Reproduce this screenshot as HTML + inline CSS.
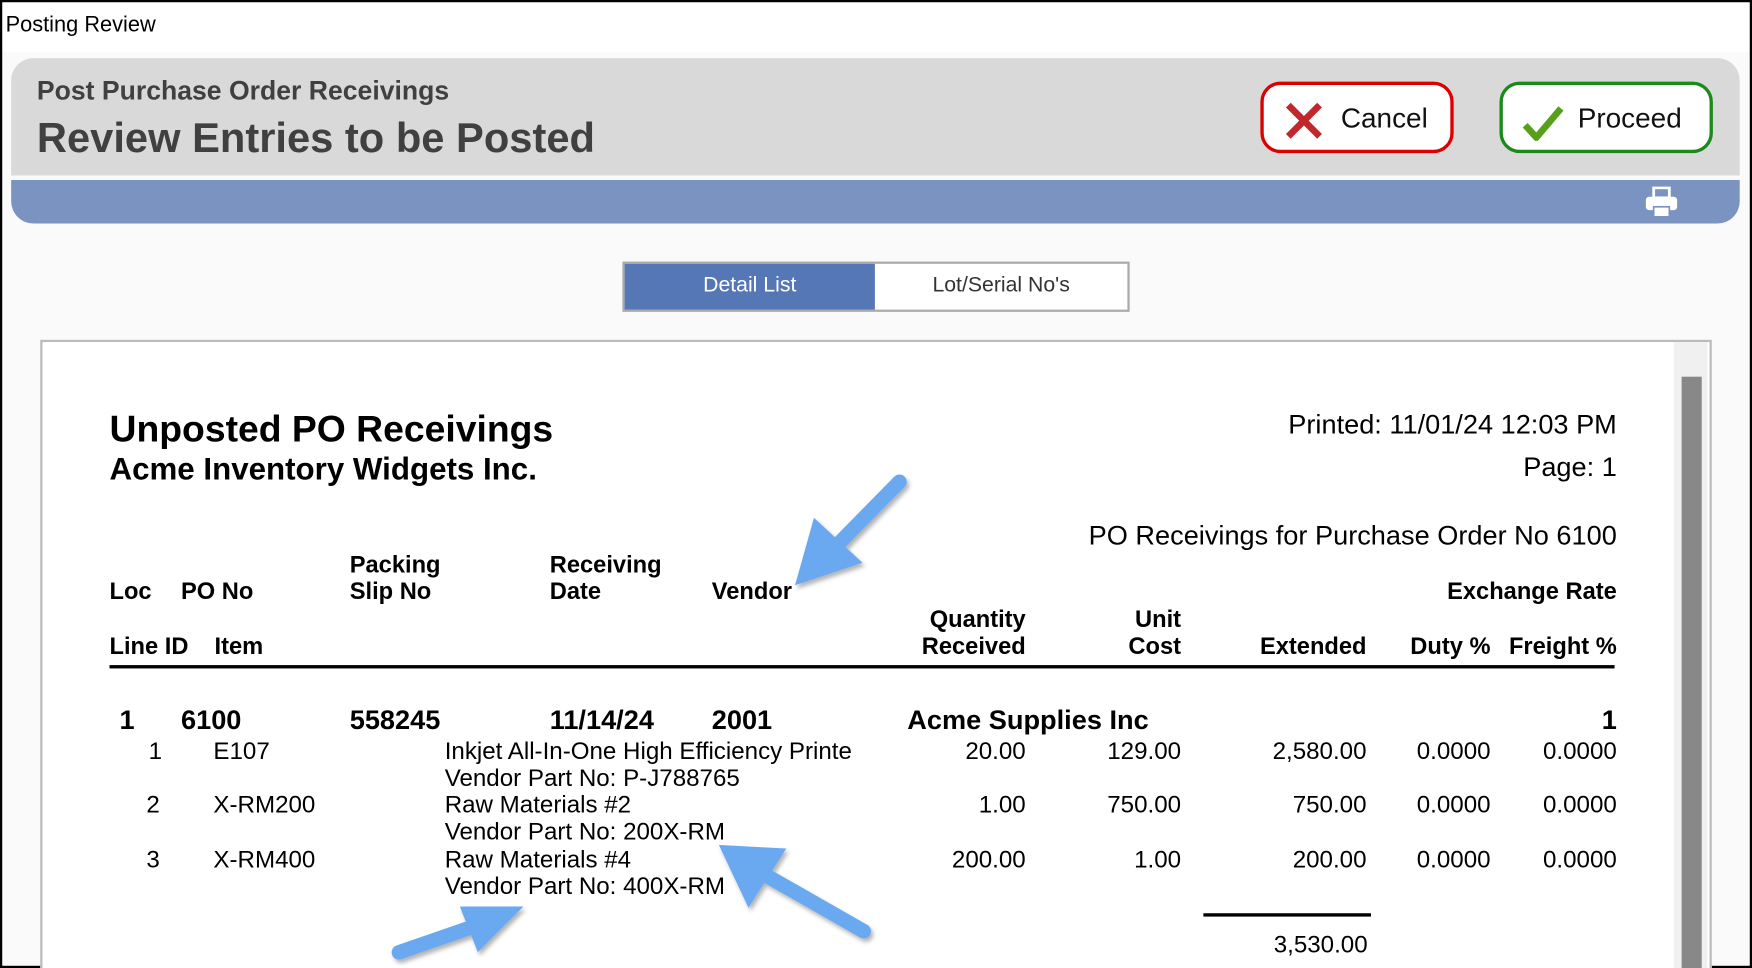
<!DOCTYPE html>
<html><head><meta charset="utf-8"><style>
html,body{margin:0;padding:0;width:1752px;height:968px;overflow:hidden;background:#fff}
#w{position:absolute;left:0;top:0;width:1568px;height:866px;transform-origin:0 0;transform:scale(1.11735,1.1178);font-family:"Liberation Sans",Arial,sans-serif;background:#fafafa;overflow:hidden}
.a{position:absolute;white-space:nowrap}
.r{text-align:right}
.b{font-weight:bold}
.t20{font-size:21.6px}
.h{font-size:21.2px;font-weight:bold}
</style></head><body><div id="w">
<div class="a" style="left:0;top:0;width:1568px;height:47px;background:#fff"></div>
<div class="a" style="left:0;top:0;width:1568px;height:2px;background:#000"></div>
<div class="a" style="left:0;top:0;width:2px;height:866px;background:#000"></div>
<div class="a" style="left:1566px;top:0;width:2px;height:866px;background:#000"></div>
<div class="a" style="left:0;top:864px;width:1568px;height:2px;background:#000"></div>
<div class="a" style="left:5px;top:11px;font-size:19.5px;color:#000">Posting Review</div>

<div class="a" style="left:10px;top:52px;width:1547px;height:105px;background:#d9d9d9;border-radius:20px 20px 0 0"></div>
<div class="a b" style="left:33px;top:68px;font-size:23.8px;color:#404040">Post Purchase Order Receivings</div>
<div class="a b" style="left:33px;top:102px;font-size:37.3px;color:#404040">Review Entries to be Posted</div>

<div class="a" style="left:1128px;top:73px;width:167px;height:58px;background:#fff;border:3px solid #d00;border-radius:18px"></div>
<svg class="a" style="left:1150px;top:92px" width="34" height="32" viewBox="0 0 34 32"><path d="M3 2 L31 30 M31 2 L3 30" stroke="#c0282d" stroke-width="6"/></svg>
<div class="a" style="left:1200px;top:92px;font-size:25px;color:#111">Cancel</div>

<div class="a" style="left:1342px;top:73px;width:185px;height:58px;background:#fff;border:3px solid #1a8a1a;border-radius:18px"></div>
<svg class="a" style="left:1362px;top:94px" width="38" height="32" viewBox="0 0 38 32"><path d="M3 18 L13 29 L35 3" stroke="#58a01c" stroke-width="6" fill="none"/></svg>
<div class="a" style="left:1412px;top:92px;font-size:25px;color:#111">Proceed</div>

<div class="a" style="left:10px;top:161px;width:1547px;height:39px;background:#7b93c1;border-radius:0 0 20px 20px"></div>
<svg class="a" style="left:1472px;top:167px" width="30" height="28" viewBox="0 0 30 28"><rect x="8" y="1" width="14" height="9" fill="none" stroke="#fff" stroke-width="2.5"/><rect x="1" y="9" width="28" height="12" rx="3" fill="#fff"/><rect x="8" y="18" width="14" height="9" fill="#fff" stroke="#7b93c1" stroke-width="1.5"/></svg>

<div class="a" style="left:557px;top:234px;width:450px;height:41px;border:2px solid #aaa;background:#fff"></div>
<div class="a" style="left:559px;top:236px;width:224px;height:41px;background:#5577b5;color:#fff;font-size:19px;line-height:40px;text-align:center">Detail List</div>
<div class="a" style="left:784px;top:236px;width:224px;height:41px;color:#333;font-size:19px;line-height:40px;text-align:center">Lot/Serial No's</div>

<div class="a" style="left:36px;top:304px;width:1492px;height:570px;border:2px solid #bbb;background:#fff"></div>
<div class="a" style="left:1498px;top:306px;width:30px;height:570px;background:#f0f0f0"></div>
<div class="a" style="left:1505px;top:337px;width:18px;height:540px;background:#888"></div>

<div class="a b" style="left:98px;top:366px;font-size:33.4px">Unposted PO Receivings</div>
<div class="a b" style="left:98px;top:404px;font-size:28px">Acme Inventory Widgets Inc.</div>
<div class="a r" style="right:121px;top:367px;font-size:24.3px">Printed: 11/01/24 12:03 PM</div>
<div class="a r" style="right:121px;top:405px;font-size:24.3px">Page: 1</div>
<div class="a r" style="right:121px;top:466px;font-size:24.3px">PO Receivings for Purchase Order No 6100</div>

<div class="a h" style="left:313px;top:494px">Packing</div>
<div class="a h" style="left:492px;top:494px">Receiving</div>
<div class="a h" style="left:98px;top:518px">Loc</div>
<div class="a h" style="left:162px;top:518px">PO No</div>
<div class="a h" style="left:313px;top:518px">Slip No</div>
<div class="a h" style="left:492px;top:518px">Date</div>
<div class="a h" style="left:637px;top:518px">Vendor</div>
<div class="a h r" style="right:121px;top:518px">Exchange Rate</div>
<div class="a h r" style="right:650px;top:543px">Quantity</div>
<div class="a h r" style="right:511px;top:543px">Unit</div>
<div class="a h" style="left:98px;top:567px">Line ID</div>
<div class="a h" style="left:192px;top:567px">Item</div>
<div class="a h r" style="right:650px;top:567px">Received</div>
<div class="a h r" style="right:511px;top:567px">Cost</div>
<div class="a h r" style="right:345px;top:567px">Extended</div>
<div class="a h r" style="right:234px;top:567px">Duty %</div>
<div class="a h r" style="right:121px;top:567px">Freight %</div>
<div class="a" style="left:98px;top:595px;width:1347px;height:3px;background:#000"></div>

<div class="a b" style="left:107px;top:631px;font-size:24.3px">1</div>
<div class="a b" style="left:162px;top:631px;font-size:24.3px">6100</div>
<div class="a b" style="left:313px;top:631px;font-size:24.3px">558245</div>
<div class="a b" style="left:492px;top:631px;font-size:24.3px">11/14/24</div>
<div class="a b" style="left:637px;top:631px;font-size:24.3px">2001</div>
<div class="a b" style="left:812px;top:631px;font-size:24.3px">Acme Supplies Inc</div>
<div class="a b r" style="right:121px;top:631px;font-size:24.3px">1</div>

<div class="a t20" style="left:133px;top:659px">1</div>
<div class="a t20" style="left:191px;top:659px">E107</div>
<div class="a t20" style="left:398px;top:659px">Inkjet All-In-One High Efficiency Printe</div>
<div class="a t20" style="left:398px;top:683px">Vendor Part No: P-J788765</div>
<div class="a t20 r" style="right:650px;top:659px">20.00</div>
<div class="a t20 r" style="right:511px;top:659px">129.00</div>
<div class="a t20 r" style="right:345px;top:659px">2,580.00</div>
<div class="a t20 r" style="right:234px;top:659px">0.0000</div>
<div class="a t20 r" style="right:121px;top:659px">0.0000</div>

<div class="a t20" style="left:131px;top:707px">2</div>
<div class="a t20" style="left:191px;top:707px">X-RM200</div>
<div class="a t20" style="left:398px;top:707px">Raw Materials #2</div>
<div class="a t20" style="left:398px;top:731px">Vendor Part No: 200X-RM</div>
<div class="a t20 r" style="right:650px;top:707px">1.00</div>
<div class="a t20 r" style="right:511px;top:707px">750.00</div>
<div class="a t20 r" style="right:345px;top:707px">750.00</div>
<div class="a t20 r" style="right:234px;top:707px">0.0000</div>
<div class="a t20 r" style="right:121px;top:707px">0.0000</div>

<div class="a t20" style="left:131px;top:756px">3</div>
<div class="a t20" style="left:191px;top:756px">X-RM400</div>
<div class="a t20" style="left:398px;top:756px">Raw Materials #4</div>
<div class="a t20" style="left:398px;top:780px">Vendor Part No: 400X-RM</div>
<div class="a t20 r" style="right:650px;top:756px">200.00</div>
<div class="a t20 r" style="right:511px;top:756px">1.00</div>
<div class="a t20 r" style="right:345px;top:756px">200.00</div>
<div class="a t20 r" style="right:234px;top:756px">0.0000</div>
<div class="a t20 r" style="right:121px;top:756px">0.0000</div>

<div class="a" style="left:1077px;top:817px;width:150px;height:3px;background:#000"></div>
<div class="a t20 r" style="right:344px;top:832px">3,530.00</div>

<svg class="a" style="left:0;top:0" width="1568" height="866" viewBox="0 0 1568 866">
<defs><filter id="s" x="-20%" y="-20%" width="140%" height="140%"><feDropShadow dx="2" dy="3" stdDeviation="2" flood-color="#000" flood-opacity="0.3"/></filter></defs>
<g fill="#6aa8f0" stroke="#6aa8f0" stroke-linecap="round" filter="url(#s)">
<line x1="805" y1="431" x2="745" y2="492" stroke-width="13"/>
<polygon points="713,522 729,465 770,503" stroke-width="2"/>
<line x1="773" y1="833" x2="680" y2="780" stroke-width="13"/>
<polygon points="645,757 702,760 670,810" stroke-width="2"/>
<line x1="357" y1="852" x2="435" y2="825" stroke-width="13"/>
<polygon points="466,812 428,850 413,812" stroke-width="2"/>
</g></svg>
</div></body></html>
